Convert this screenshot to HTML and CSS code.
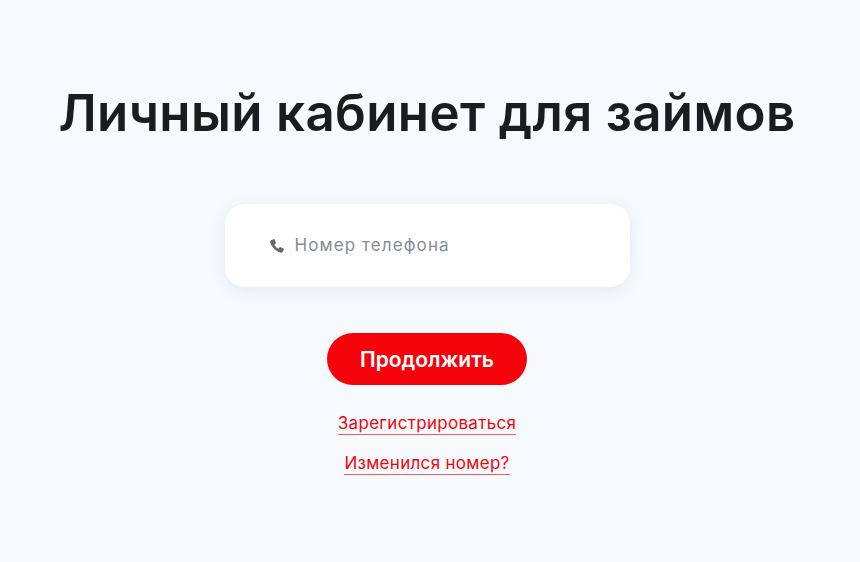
FILE: index.html
```html
<!DOCTYPE html>
<html lang="ru">
<head>
  <meta charset="UTF-8" />
  <meta name="viewport" content="width=device-width, initial-scale=1.0"/>
  <title>Личный кабинет для займов</title>
  <link rel="stylesheet" href="styles.css">
</head>
<body>
  <div class="login-container">
    <h1>Личный кабинет для займов</h1>

    <div class="phone-card">
      <svg class="phone-icon" viewBox="0 0 24 24" width="16" height="16">
        <path d="M6.6 1.8 L3.2 3.4 C1.9 4.2 1.6 5.6 2.1 7.2 C4.2 13.8 10.2 19.8 16.8 21.9 C18.4 22.4 19.8 22.1 20.6 20.8 L22.2 17.4 C22.5 16.8 22.3 16.2 21.8 15.9 L17.4 13.7 C16.9 13.4 16.3 13.5 15.9 14 L14.2 16.1 C11.6 14.9 9.1 12.4 7.9 9.8 L10 8.1 C10.5 7.7 10.6 7.1 10.3 6.6 L8.1 2.2 C7.8 1.7 7.2 1.5 6.6 1.8 Z"/>
      </svg>
      <span class="phone-placeholder">Номер телефона</span>
    </div>

    <button class="submit-button">Продолжить</button>

    <a class="text-link" href="#">Зарегистрироваться</a>
    <a class="text-link" href="#">Изменился номер?</a>
  </div>
</body>
</html>
```

FILE: styles.css
```css
* {
  box-sizing: border-box;
}

body {
  margin: 0;
  height: 562px;
  overflow: hidden;
  background: #f6fafd;
  font-family: 'Inter', 'Open Sans', sans-serif;
  color: #1a1c1e;
}

.login-container {
  display: flex;
  flex-direction: column;
  align-items: center;
  padding: 83px 6px 0 0;
}

h1 {
  margin: 0 0 61px;
  font-size: 51px;
  line-height: 60px;
  font-weight: 600;
  letter-spacing: 0.36px;
  white-space: nowrap;
}

.phone-card {
  display: flex;
  align-items: center;
  gap: 10px;
  width: 405px;
  height: 83px;
  padding: 0 0 0 44px;
  margin-bottom: 46px;
  background: #fff;
  border-radius: 20px;
  box-shadow: 0 3px 16px rgba(120, 150, 180, 0.16);
}

.phone-icon {
  fill: #62686c;
  flex: none;
}

.phone-placeholder {
  color: #7f8e96;
  font-size: 17px;
  letter-spacing: 1.1px;
  margin-bottom: 2px;
}

.submit-button {
  width: 200px;
  height: 52px;
  margin-bottom: 27px;
  border: none;
  border-radius: 26px;
  background: #f4040a;
  color: #fff;
  font-family: inherit;
  font-size: 21px;
  font-weight: 600;
  cursor: pointer;
}

.text-link {
  color: #f4040a;
  font-size: 17px;
  letter-spacing: 0.3px;
  line-height: 22px;
  margin-bottom: 17px;
  text-decoration: none;
  border-bottom: 1px solid #f9575a;
}
```
